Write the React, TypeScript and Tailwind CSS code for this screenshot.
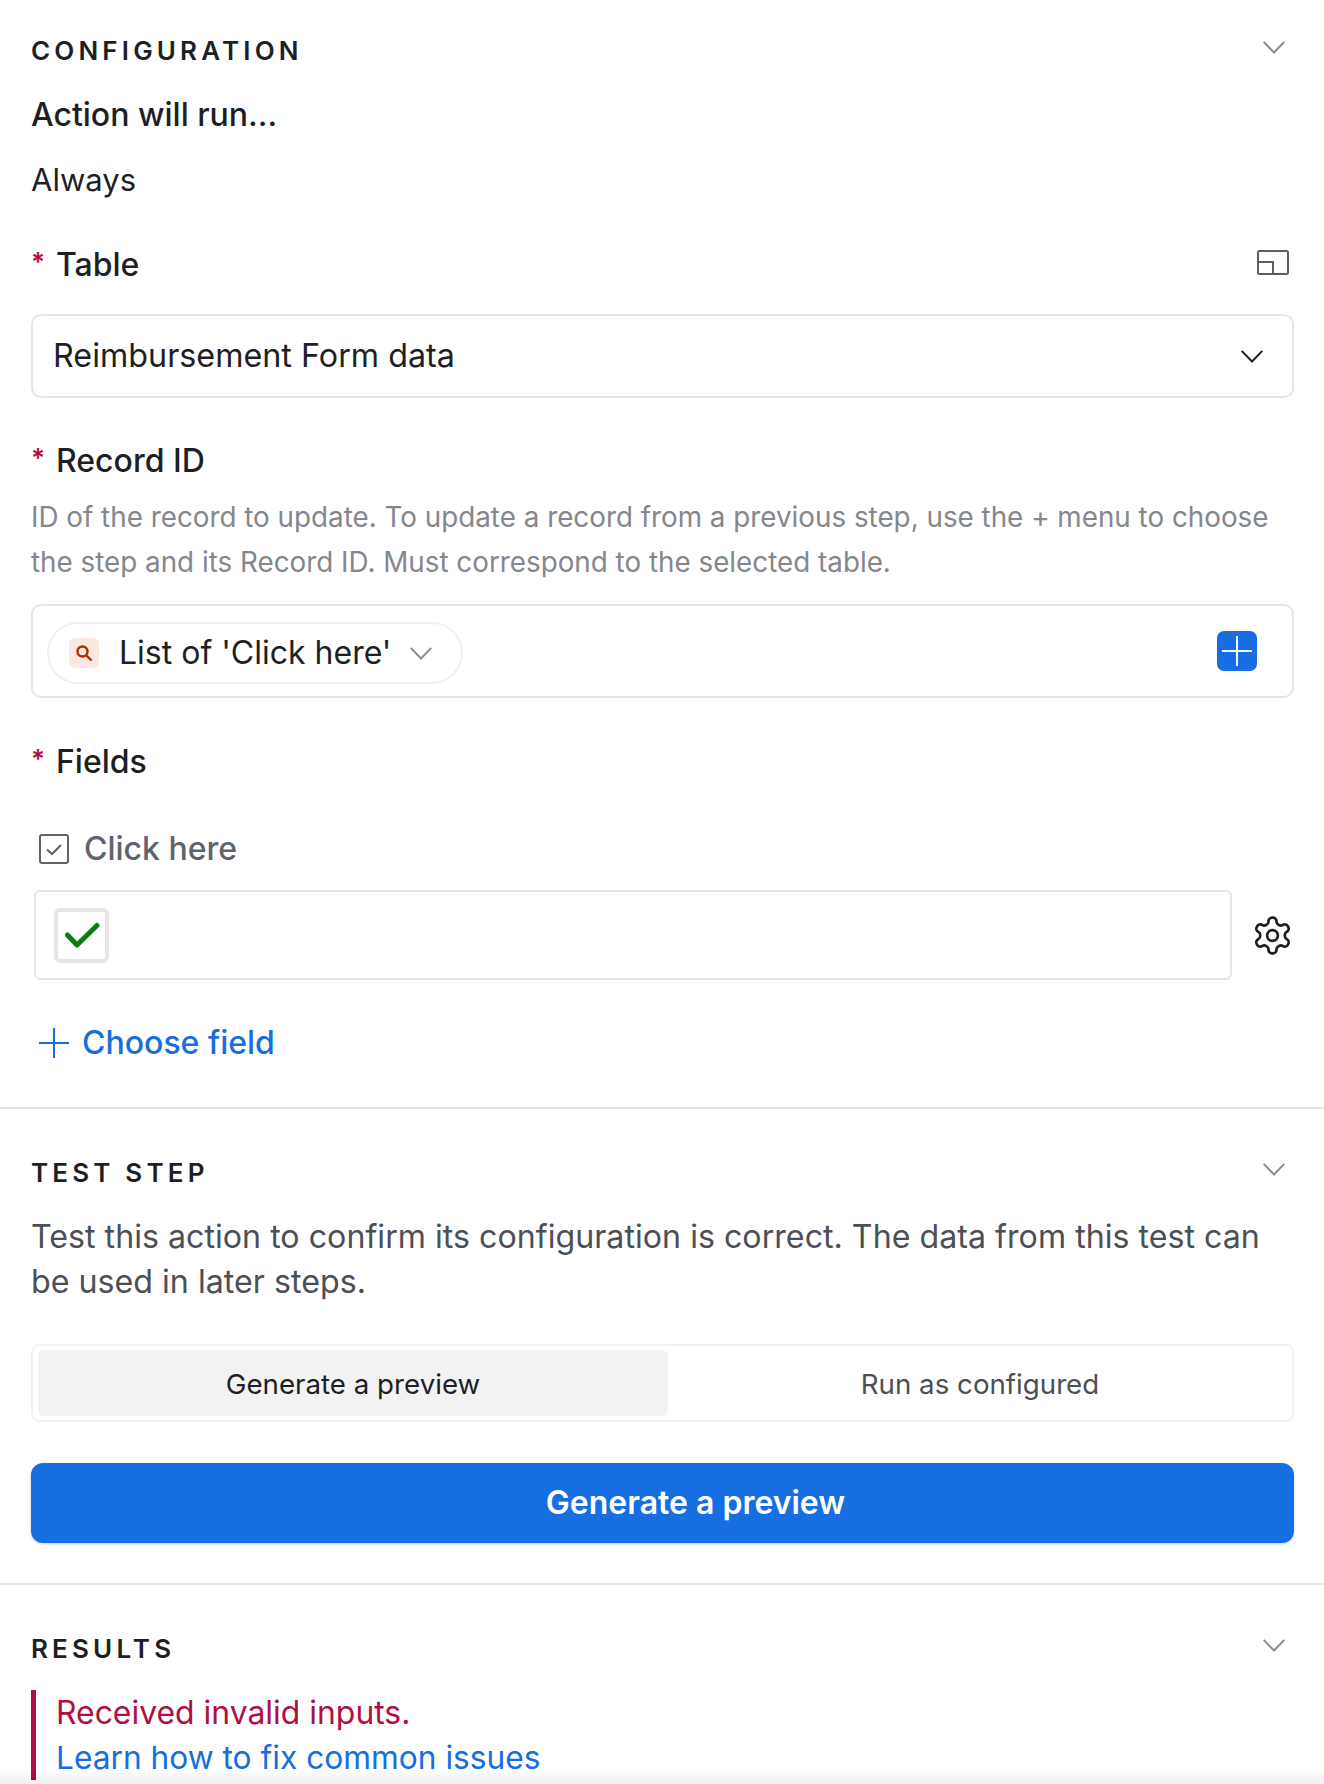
function Chevron({ className }: { className: string }) {
  return (
    <svg className={className} viewBox="0 0 22 13" fill="none" stroke="currentColor" strokeWidth="2">
      <path d="M0.7 0.9 11 11.5 21.3 0.9" />
    </svg>
  )
}

function SectionHeader({ title }: { title: string }) {
  return (
    <div className="flex h-[44px] items-center justify-between">
      <h2 className="mt-[-2px] text-[26px] font-semibold tracking-[0.16em] text-[#1d1f25]">{title}</h2>
      <Chevron className="mr-[9px] mt-[-8px] h-[13px] w-[22px] text-[#8a8c90]" />
    </div>
  )
}

function RequiredLabel({ text }: { text: string }) {
  return (
    <div className="flex h-[44px] items-center text-[32px] font-medium text-[#1d1f25]">
      <span className="mt-[-8px] w-[25px] text-[26px] font-semibold text-[#b10f41]">*</span>
      {text}
    </div>
  )
}

export default function App() {
  return (
    <div className="relative h-[1784px] overflow-hidden bg-white font-['Inter',sans-serif]">
      <section className="border-b-2 border-[#e5e5e5] pb-[42px] pl-[31px] pr-[30px] pt-[29px]">
        <SectionHeader title="CONFIGURATION" />
        <div className="mt-[20px] text-[32px] font-medium leading-[44px] text-[#1d1f25]">Action will run...</div>
        <div className="mt-[21px] text-[31px] leading-[44px] text-[#1d1f25]">Always</div>

        <div className="mt-[41px] flex items-center justify-between">
          <RequiredLabel text="Table" />
          <svg className="mr-[5px] mt-[-5px] h-[25px] w-[32px]" viewBox="0 0 32 25" fill="none" stroke="#5c5e64" strokeWidth="2">
            <rect x="1" y="1" width="30" height="23" rx="1.5" />
            <path d="M1 12h15v12" />
          </svg>
        </div>
        <div className="mt-[27px] flex h-[84px] items-center justify-between rounded-[10px] border-2 border-[#e5e5e5] pl-[20px] pr-[29px] text-[32.3px] text-[#1d1f25]">
          Reimbursement Form data
          <Chevron className="h-[13px] w-[22px] text-[#1d1f25]" />
        </div>

        <div className="mt-[41px]">
          <RequiredLabel text="Record ID" />
        </div>
        <p className="mt-[12px] text-[27.8px] leading-[45px] text-[#85878c]">
          ID of the record to update. To update a record from a previous step, use the + menu to choose the step and its Record ID. Must correspond to the selected table.
        </p>
        <div className="mt-[19px] flex h-[94px] items-center justify-between rounded-[10px] border-2 border-[#e5e5e5] pl-[14px] pr-[35px]">
          <div className="mt-[4px] flex h-[62px] w-[416px] items-center rounded-full border-2 border-[#f0f0f0] pl-[20px] text-[32px] text-[#1d1f25]">
            <span className="flex size-[30px] items-center justify-center rounded-[6px] bg-[#fde8df]">
              <svg className="size-[20px]" viewBox="0 0 20 20" fill="none" stroke="#a92e05" strokeWidth="2.4">
                <circle cx="8.5" cy="8.5" r="5" />
                <path d="M12.5 12.5l5 5" />
              </svg>
            </span>
            <span className="ml-[20px]">List of 'Click here'</span>
            <Chevron className="ml-[19px] h-[13px] w-[22px] text-[#8a8c90]" />
          </div>
          <span className="flex size-[40px] items-center justify-center rounded-[7px] bg-[#166ee1]">
            <svg className="size-[32px]" viewBox="0 0 32 32" stroke="#ffffff" strokeWidth="2">
              <path d="M16 1v30M1 16h30" />
            </svg>
          </span>
        </div>

        <div className="mt-[42px]">
          <RequiredLabel text="Fields" />
        </div>
        <div className="mt-[43px] flex h-[44px] items-center pl-[8px] text-[32px] font-medium text-[#5f636d]">
          <svg className="size-[30px]" viewBox="0 0 30 30" fill="none" stroke="#5f636d" strokeWidth="2">
            <rect x="1" y="1" width="28" height="28" rx="2" />
            <path d="M8 15.5l5 4.5 9-9" />
          </svg>
          <span className="ml-[15px]">Click here</span>
        </div>
        <div className="mt-[19px] flex items-center pl-[3px]">
          <div className="flex h-[90px] w-[1198px] items-center rounded-[6px] border-2 border-[#e5e5e5] pl-[18px]">
            <span className="flex size-[55px] items-center justify-center rounded-[6px] border-[4px] border-[#e5e5e5]">
              <svg className="size-[36px]" viewBox="0 0 36 36" fill="none" stroke="#0d7f0d" strokeWidth="5" strokeLinecap="round" strokeLinejoin="round">
                <path d="M3.5 18l9.5 10L33 8.5" />
              </svg>
            </span>
          </div>
          <svg className="ml-[19px] size-[43px]" viewBox="0 0 24 24" fill="none" stroke="#1d1f25" strokeWidth="1.5" strokeLinecap="round" strokeLinejoin="round">
            <path d="M12.22 2h-.44a2 2 0 0 0-2 2v.18a2 2 0 0 1-1 1.73l-.43.25a2 2 0 0 1-2 0l-.15-.08a2 2 0 0 0-2.73.73l-.22.38a2 2 0 0 0 .73 2.73l.15.1a2 2 0 0 1 1 1.72v.51a2 2 0 0 1-1 1.74l-.15.09a2 2 0 0 0-.73 2.73l.22.38a2 2 0 0 0 2.73.73l.15-.08a2 2 0 0 1 2 0l.43.25a2 2 0 0 1 1 1.73V20a2 2 0 0 0 2 2h.44a2 2 0 0 0 2-2v-.18a2 2 0 0 1 1-1.73l.43-.25a2 2 0 0 1 2 0l.15.08a2 2 0 0 0 2.73-.73l.22-.39a2 2 0 0 0-.73-2.73l-.15-.08a2 2 0 0 1-1-1.74v-.5a2 2 0 0 1 1-1.74l.15-.09a2 2 0 0 0 .73-2.73l-.22-.38a2 2 0 0 0-2.73-.73l-.15.08a2 2 0 0 1-2 0l-.43-.25a2 2 0 0 1-1-1.73V4a2 2 0 0 0-2-2z" />
            <circle cx="12" cy="12" r="3" />
          </svg>
        </div>
        <div className="mt-[41px] flex h-[44px] items-center pl-[8px] text-[32px] font-medium text-[#166ee1]">
          <svg className="size-[30px]" viewBox="0 0 30 30" stroke="#166ee1" strokeWidth="2">
            <path d="M15 0v30M0 15h30" />
          </svg>
          <span className="ml-[13px]">Choose field</span>
        </div>
      </section>

      <section className="border-b-2 border-[#e5e5e5] pb-[40px] pl-[31px] pr-[30px] pt-[42px]">
        <SectionHeader title="TEST STEP" />
        <p className="mt-[19px] text-[32.2px] leading-[45px] text-[#4c4f56]">
          Test this action to confirm its configuration is correct. The data from this test can be used in later steps.
        </p>
        <div className="mt-[40px] grid h-[78px] grid-cols-[630px_1fr] rounded-[8px] border-2 border-[#f2f2f2] py-[4px] pl-[5px] text-[27.7px]">
          <div className="flex items-center justify-center rounded-[6px] bg-[#f2f2f2] pt-[3px] text-[#1d1f25]">Generate a preview</div>
          <div className="flex items-center justify-center pt-[3px] text-[#4c4f56]">Run as configured</div>
        </div>
        <button className="mt-[41px] flex h-[80px] w-full items-center justify-center rounded-[12px] bg-[#166ee1] pl-[66px] text-[32px] font-semibold text-white shadow-[0_1px_3px_rgba(0,0,0,0.2)]">
          Generate a preview
        </button>
      </section>

      <section className="pl-[31px] pr-[30px] pt-[42px]">
        <SectionHeader title="RESULTS" />
        <div className="mt-[19px] border-l-[5px] border-[#b10f41] pl-[20px] text-[31.7px] leading-[45px]">
          <div className="text-[31.9px] text-[#b10f41]">Received invalid inputs.</div>
          <div className="text-[#166ee1]">Learn how to fix common issues</div>
        </div>
      </section>

      {/* scroll shadow along the bottom edge */}
      <div className="absolute inset-x-0 bottom-0 h-[16px] bg-gradient-to-b from-transparent to-[#0000000f]" />
    </div>
  )
}
